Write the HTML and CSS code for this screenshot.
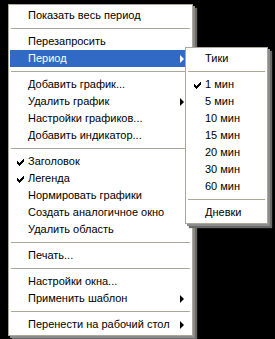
FILE: index.html
```html
<!DOCTYPE html>
<html lang="ru">
<head>
    <meta charset="UTF-8">
    <title>Контекстное меню</title>
    <link rel="stylesheet" href="styles.css">
</head>
<body>

    <div class="menu main-menu">
        <div class="item">Показать весь период</div>
        <div class="sep"></div>
        <div class="item">Перезапросить</div>
        <div class="item active has-sub">Период<span class="arrow"></span></div>
        <div class="sep"></div>
        <div class="item">Добавить график...</div>
        <div class="item has-sub">Удалить график<span class="arrow"></span></div>
        <div class="item">Настройки графиков...</div>
        <div class="item">Добавить индикатор...</div>
        <div class="sep"></div>
        <div class="item checked">Заголовок</div>
        <div class="item checked">Легенда</div>
        <div class="item">Нормировать графики</div>
        <div class="item">Создать аналогичное окно</div>
        <div class="item">Удалить область</div>
        <div class="sep"></div>
        <div class="item">Печать...</div>
        <div class="sep"></div>
        <div class="item">Настройки окна...</div>
        <div class="item has-sub">Применить шаблон<span class="arrow"></span></div>
        <div class="sep"></div>
        <div class="item has-sub">Перенести на рабочий стол<span class="arrow"></span></div>
    </div>

    <div class="menu sub-menu">
        <div class="item">Тики</div>
        <div class="sep"></div>
        <div class="item checked">1 мин</div>
        <div class="item">5 мин</div>
        <div class="item">10 мин</div>
        <div class="item">15 мин</div>
        <div class="item">20 мин</div>
        <div class="item">30 мин</div>
        <div class="item">60 мин</div>
        <div class="sep"></div>
        <div class="item">Дневки</div>
    </div>

</body>
</html>
```

FILE: styles.css
```css
body {
    margin: 0;
    padding: 4px 0 0 8px;
    background: #000;
    font-family: "Liberation Sans", Arial, sans-serif;
    font-size: 11px;
    color: #000;
    height: 339px;
    box-sizing: border-box;
    position: relative;
}
.menu {
    background: #fff;
    border: 1px solid #aca899;
    padding: 2px 1px;
    display: flex;
    flex-direction: column;
    box-shadow: 2px 2px 0 #8c8c8c, 4px 4px 1px #6a6a6a;
}
.main-menu {
    width: 181px;
}
.sub-menu {
    position: absolute;
    left: 185px;
    top: 47px;
    width: 79px;
}
.item {
    height: 17px;
    line-height: 17px;
    padding-left: 18px;
    position: relative;
    white-space: nowrap;
}
.item.active {
    background: #316ac5;
    color: #fff;
}
.arrow {
    position: absolute;
    right: 7px;
    top: 5px;
    width: 0;
    height: 0;
    border-top: 4px solid transparent;
    border-bottom: 4px solid transparent;
    border-left: 4px solid #000;
}
.active .arrow {
    border-left-color: #fff;
}
.checked::before {
    content: "";
    position: absolute;
    left: 7px;
    top: 6px;
    width: 7px;
    height: 7px;
    background: url("data:image/svg+xml;utf8,<svg xmlns='http://www.w3.org/2000/svg' width='7' height='7'><path d='M0 2h1v1h1v1h1v-1h1v-1h1v-1h1v-1h1v3h-1v1h-1v1h-1v1h-1v1h-1v-1h-1v-1h-1z' fill='black'/></svg>") no-repeat;
}
.sep {
    height: 9px;
    position: relative;
}
.sep::after {
    content: "";
    position: absolute;
    left: 1px;
    right: 1px;
    top: 4px;
    border-top: 1px solid #aca899;
}
```
